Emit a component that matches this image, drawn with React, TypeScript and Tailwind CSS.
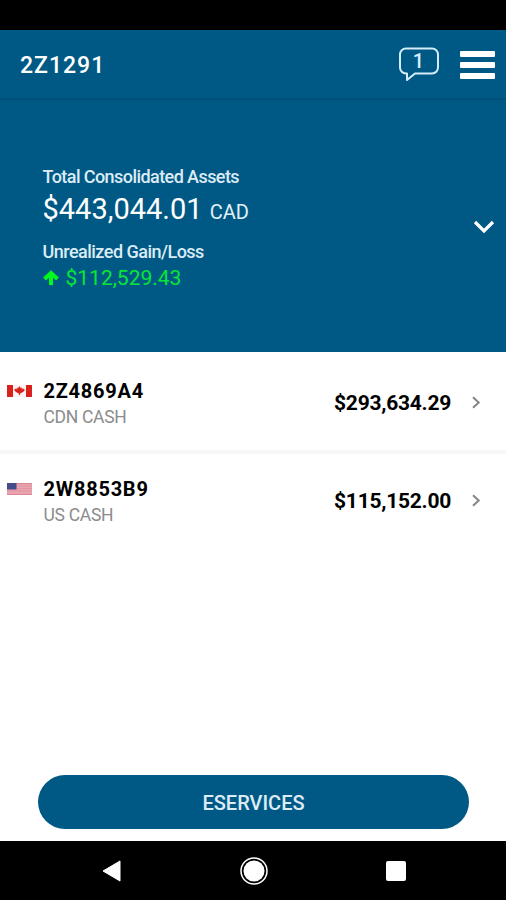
import React from 'react';

interface Account {
  id: string;
  label: string;
  amount: string;
  flag: React.ReactNode;
}

const CanadaFlag: React.FC = () => (
  <svg width="25" height="12" viewBox="0 0 25 12">
    <rect width="25" height="12" fill="#fdf3f2" />
    <rect width="6" height="12" fill="#d8201c" />
    <rect x="19" width="6" height="12" fill="#d8201c" />
    <path
      d="M12.500 1.500l1.200 1.700 1.100-.4-.2 1.600 1.800-.7 1.200 1.200-.9 1.300-2.600 1.700h-1.100v1.800h-1V7.900h-1.100L8.300 6.200l-.9-1.300 1.200-1.200 1.800.7-.2-1.600 1.100.4z"
      fill="#d8201c"
      stroke="#d8201c"
      strokeWidth=".4"
    />
  </svg>
);

const UsFlag: React.FC = () => (
  <svg width="25" height="12" viewBox="0 0 25 12">
    <rect width="25" height="12" fill="#e9a5af" />
    <path d="M0 .5h25M0 11.500h25" stroke="#d98592" />
    <path d="M0 3h25M0 5.500h25M0 8h25" stroke="#df909c" strokeWidth=".8" />
    <rect width="9.500" height="6.500" fill="#464b8a" />
  </svg>
);

const accounts: Account[] = [
  { id: '2Z4869A4', label: 'CDN CASH', amount: '$293,634.29', flag: <CanadaFlag /> },
  { id: '2W8853B9', label: 'US CASH', amount: '$115,152.00', flag: <UsFlag /> },
];

const Header: React.FC = () => (
  <header className="flex h-[70px] shrink-0 items-center justify-between border-b-2 border-[#004f78] bg-[#005984] pl-5 pr-[11.5px]">
    <h1 className="pt-[3px] text-[23px] font-medium leading-7 tracking-[1px]">2Z1291</h1>
    <div className="flex items-center gap-5 pt-px">
      <button className="relative h-9 w-[42px]">
        <svg width="42" height="36" viewBox="0 0 42 36" fill="none">
          <path
            d="M8 1.500h26a6 6 0 0 1 6 6v13a6 6 0 0 1-6 6H17l-8 6.500v-6.500H8a6 6 0 0 1-6-6v-13a6 6 0 0 1 6-6z"
            stroke="#d5edf8"
            strokeWidth="2"
            strokeLinejoin="round"
          />
        </svg>
        <span className="absolute inset-x-0 top-[2px] text-center text-[20px] font-medium leading-6 text-[#d5edf8]">
          1
        </span>
      </button>
      <button className="flex w-[35px] flex-col gap-[5px] pt-px">
        <span className="h-[6px] rounded-[1px] bg-white" />
        <span className="h-[6px] rounded-[1px] bg-white" />
        <span className="h-[6px] rounded-[1px] bg-white" />
      </button>
    </div>
  </header>
);

const Summary: React.FC = () => (
  <section className="flex h-[252px] shrink-0 items-center justify-between bg-[#005984] pl-[42.5px] pr-[11px]">
    <div className="whitespace-nowrap pt-[5px]">
      <p className="text-[18px] font-medium leading-6 tracking-[-0.57px] text-[#dcecf6]">Total Consolidated Assets</p>
      <p className="text-[29px] leading-10">
        $443,044.01{' '}
        <span className="text-[20px] text-[#e3f1f9]">CAD</span>
      </p>
      <p className="mt-2 text-[18px] font-medium leading-6 tracking-[-0.52px] text-[#dcecf6]">Unrealized Gain/Loss</p>
      <p className="flex items-center gap-[7px] text-[21px] leading-7 text-[#06e636]">
        <svg
          className="-mt-[2px]"
          width="16"
          height="15"
          viewBox="0 0 16 15"
          fill="none"
          stroke="#00fa1e"
          strokeWidth="4"
        >
          <path d="M1.500 9L8 3l6.500 6M8 3v12" />
        </svg>
        $112,529.43
      </p>
    </div>
    <svg className="mt-px" width="22" height="14" viewBox="0 0 22 14" fill="none" stroke="#fff" strokeWidth="3.200">
      <path d="M2 2l9 9 9-9" />
    </svg>
  </section>
);

const AccountRow: React.FC<{ account: Account }> = ({ account }) => (
  <li className="flex h-[98px] items-center border-t-4 border-[#f7f7f7] pl-[7px] pr-[25px] first:border-transparent">
    <div className="flex flex-1 items-start gap-[11.5px] pt-px">
      <div className="pt-[7px]">{account.flag}</div>
      <div>
        <p className="text-[20px] font-bold leading-[26px] tracking-[0.75px] text-black">{account.id}</p>
        <p className="text-[17.5px] leading-[26px] tracking-[-0.3px] text-[#8c8c8c]">{account.label}</p>
      </div>
    </div>
    <span className="pt-px text-[21px] font-bold tracking-[-0.25px] text-black">{account.amount}</span>
    <svg className="ml-[21px]" width="9" height="14" viewBox="0 0 9 14" fill="none" stroke="#858585" strokeWidth="2">
      <path d="M1 1.200l5.700 5.300L1 11.800" />
    </svg>
  </li>
);

const NavBar: React.FC = () => (
  <nav className="flex h-[59px] shrink-0 items-center justify-between bg-black pl-[102px] pr-[100px]">
    <svg width="19" height="22" viewBox="0 0 19 22">
      <path d="M1 11L18 1v20z" fill="#fff" stroke="#fff" strokeLinejoin="round" />
    </svg>
    <svg width="28" height="28" viewBox="0 0 28 28">
      <circle cx="14" cy="14" r="13" fill="none" stroke="#fff" strokeWidth="1.500" />
      <circle cx="14" cy="14" r="10.500" fill="#fff" />
    </svg>
    <span className="h-5 w-5 rounded-[2px] bg-white" />
  </nav>
);

const App: React.FC = () => {
  return (
    <div className="flex h-[900px] w-[506px] flex-col overflow-hidden bg-white font-['Roboto',sans-serif] text-white">
      <div className="h-[30px] shrink-0 bg-black" />
      <Header />
      <Summary />
      <ul className="flex-1">
        {accounts.map((account) => (
          <AccountRow key={account.id} account={account} />
        ))}
      </ul>
      <div className="pb-3 pl-[38px] pr-[37px]">
        <button className="h-[54px] w-full rounded-full bg-[#005984] pt-[2px] text-[20px] font-medium text-[#dcecf6]">
          ESERVICES
        </button>
      </div>
      <NavBar />
    </div>
  );
};

export default App;
